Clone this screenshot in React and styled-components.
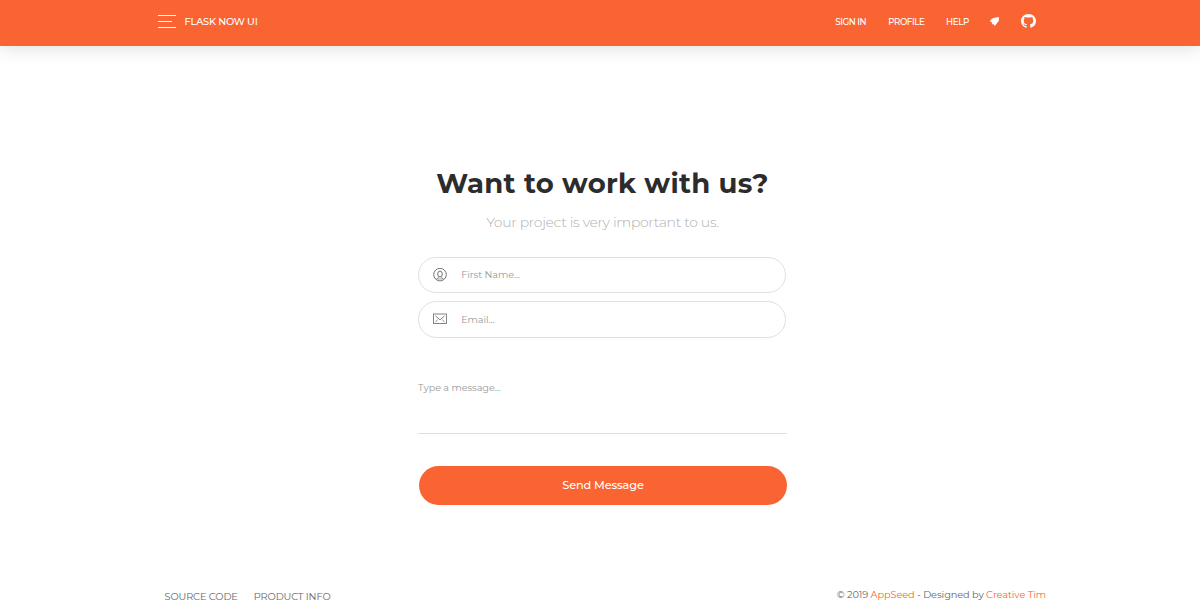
import React from 'react';
import styled, { createGlobalStyle } from 'styled-components';

const Global = createGlobalStyle`
  * { box-sizing: border-box; }
  body {
    margin: 0;
    background: #fff;
    overflow: hidden;
    font-family: Montserrat, Inter, "Open Sans", sans-serif;
  }
`;

const Page = styled.div`
  height: 600px;
  display: flex;
  flex-direction: column;
  overflow: hidden;
`;

const Navbar = styled.header`
  flex: none;
  height: 46px;
  padding: 0 164px 3px 158px;
  display: flex;
  align-items: center;
  justify-content: space-between;
  background: #fa6432;
  color: #fff;
  box-shadow: 0 1px 20px rgba(0, 0, 0, 0.15);
`;

const Brand = styled.div`
  display: flex;
  align-items: center;
  gap: 8.5px;
`;

const Burger = styled.div`
  width: 18px;
  height: 13px;
  display: flex;
  flex-direction: column;
  justify-content: space-between;
`;

const Bar = styled.span`
  height: 1px;
  width: ${(p) => (p.$short ? 14 : 18)}px;
  background: #fff;
`;

const Text = styled.span`
  font-size: ${(p) => p.$size}px;
  font-weight: ${(p) => p.$weight || 400};
  letter-spacing: ${(p) => p.$track || 0}px;
  line-height: 14px;
  white-space: nowrap;
`;

const Nav = styled.nav`
  display: flex;
  align-items: center;
`;

const NavItem = styled.a`
  display: flex;
  align-items: center;
  margin-left: ${(p) => p.$gap || 0}px;
  padding-bottom: ${(p) => p.$lift || 0}px;
`;

const Main = styled.main`
  flex: 1;
  width: 369px;
  margin-left: 418px;
  padding-top: 119px;
  display: flex;
  flex-direction: column;
`;

const Title = styled.h2`
  margin: 0;
  height: 36px;
  line-height: 36px;
  font-size: 27.5px;
  font-weight: 700;
  letter-spacing: 0.28px;
  color: #2c2c2c;
  text-align: center;
  white-space: nowrap;
`;

const Lead = styled.p`
  margin: 11px 0 1px;
  height: 20px;
  line-height: 20px;
  font-size: 14px;
  font-weight: 300;
  letter-spacing: -0.32px;
  color: #b0b0b0;
  text-align: center;
  white-space: nowrap;
`;

const Field = styled.label`
  width: 368px;
  height: ${(p) => p.$height}px;
  margin-top: ${(p) => p.$gap}px;
  padding: 0 14px;
  display: flex;
  align-items: center;
  gap: 14.2px;
  border: 1px solid #e0e0e0;
  border-radius: 19px;
  color: #999;
`;

const Message = styled.div`
  height: 65px;
  margin-top: 31px;
  padding-top: 12px;
  line-height: 14px;
  display: flex;
  align-items: flex-start;
  border-bottom: 1px solid #e0e0e0;
  color: #999;
`;

const Button = styled.button`
  width: 368px;
  height: 39px;
  margin: 32px 0 0 1px;
  padding: 0 0 1px;
  display: flex;
  align-items: center;
  justify-content: center;
  border: 0;
  border-radius: 20px;
  background: #fa6432;
  color: #fff;
  font-family: inherit;
`;

const Footer = styled.footer`
  flex: none;
  height: 16px;
  padding: 0 154px 0 164.5px;
  display: flex;
  justify-content: space-between;
  color: #666;
`;

const FooterLinks = styled.div`
  display: flex;
  gap: 16px;
  padding-top: 6px;
`;

const Copyright = styled.div`
  display: flex;
  padding-top: 4px;
`;

const Accent = styled.a`
  color: #fa6432;
`;

const Plane = () => (
  <svg width="9" height="9" viewBox="0 0 9 9" fill="#fff">
    <path d="M9 .1 8.8 4 7.4 5.6 5.2 8.4 4 8.5 3.9 7 2.7 7.4 1.8 6.4 2.2 5.3.3 5 0 3.9 1.6 2 3.4 1Z" />
  </svg>
);

const Github = () => (
  <svg width="15" height="14" viewBox="0 0 16 16" preserveAspectRatio="none" fill="#fff">
    <path d="M8 0C3.58 0 0 3.58 0 8c0 3.54 2.29 6.53 5.47 7.59.4.07.55-.17.55-.38 0-.19-.01-.82-.01-1.49-2.01.37-2.53-.49-2.69-.94-.09-.23-.48-.94-.82-1.13-.28-.15-.68-.52-.01-.53.63-.01 1.08.58 1.23.82.72 1.21 1.87.87 2.33.66.07-.52.28-.87.51-1.07-1.78-.2-3.64-.89-3.64-3.95 0-.87.31-1.59.82-2.15-.08-.2-.36-1.02.08-2.12 0 0 .67-.21 2.2.82.64-.18 1.32-.27 2-.27s1.36.09 2 .27c1.53-1.04 2.2-.82 2.2-.82.44 1.1.16 1.92.08 2.12.51.56.82 1.27.82 2.15 0 3.07-1.87 3.75-3.65 3.95.29.25.54.73.54 1.48 0 1.07-.01 1.93-.01 2.2 0 .21.15.46.55.38A8.01 8.01 0 0 0 16 8c0-4.42-3.58-8-8-8Z" />
  </svg>
);

const UserIcon = () => (
  <svg width="14" height="14" viewBox="0 0 14 14" fill="none" stroke="#666" strokeWidth="0.9">
    <circle cx="7" cy="6.6" r="6.3" />
    <ellipse cx="7" cy="6" rx="2.3" ry="2.9" />
    <path d="M5.8 8.6v.9L3.4 10.8M8.2 8.6v.9l2.4 1.3M3.8 11h6.4" strokeWidth="0.6" />
  </svg>
);

const MailIcon = () => (
  <svg width="14" height="14" viewBox="0 0 14 14" fill="none" stroke="#777" strokeWidth="0.9">
    <rect x="0.5" y="1" width="13" height="9.5" />
    <path d="M2.5 3 7 6.8 11.5 3M2.5 8.8l2.2-2M11.5 8.8l-2.2-2" />
  </svg>
);

export default function App() {
  return (
    <Page>
      <Global />
      <Navbar>
        <Brand>
          <Burger><Bar /><Bar $short /><Bar /></Burger>
          <Text $size={9.8} $weight={500} $track={-0.2}>FLASK NOW UI</Text>
        </Brand>
        <Nav>
          <NavItem><Text $size={8.7} $weight={500} $track={-0.42}>SIGN IN</Text></NavItem>
          <NavItem $gap={22}><Text $size={8.7} $weight={500} $track={-0.42}>PROFILE</Text></NavItem>
          <NavItem $gap={21.7}><Text $size={8.7} $weight={500} $track={-0.38}>HELP</Text></NavItem>
          <NavItem $gap={21.2} $lift={1}><Plane /></NavItem>
          <NavItem $gap={22} $lift={1}><Github /></NavItem>
        </Nav>
      </Navbar>
      <Main>
        <Title>Want to work with us?</Title>
        <Lead>Your project is very important to us.</Lead>
        <Field $height={36} $gap={24}><UserIcon /><Text $size={9.7} $track={-0.08}>First Name...</Text></Field>
        <Field $height={37} $gap={8}><MailIcon /><Text $size={9.7} $track={-0.08}>Email...</Text></Field>
        <Message><Text $size={9.7} $track={-0.08}>Type a message...</Text></Message>
        <Button><Text $size={11.3} $weight={500} $track={-0.12}>Send Message</Text></Button>
      </Main>
      <Footer>
        <FooterLinks>
          <Text $size={9.8} $track={-0.12}>SOURCE CODE</Text>
          <Text $size={9.8} $track={-0.14}>PRODUCT INFO</Text>
        </FooterLinks>
        <Copyright>
          <Text $size={9.8} $track={-0.11}>© 2019 <Accent>AppSeed</Accent> - Designed by <Accent>Creative Tim</Accent></Text>
        </Copyright>
      </Footer>
    </Page>
  );
}
